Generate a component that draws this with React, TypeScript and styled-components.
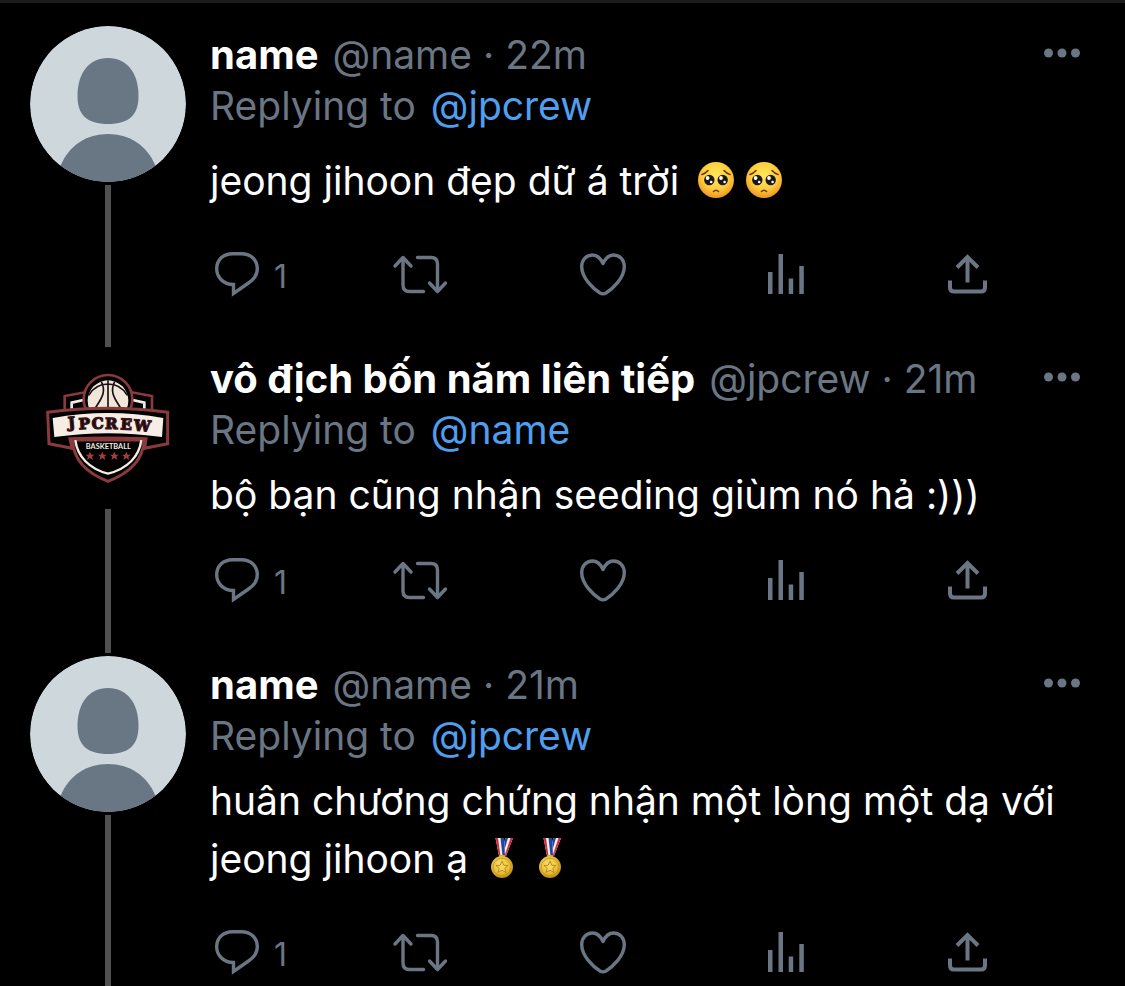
import React from "react";
import styled, { createGlobalStyle } from "styled-components";

const GlobalStyle = createGlobalStyle`
  *, *::before, *::after { box-sizing: border-box; }
  body {
    margin: 0;
    background: #000;
    color: #fff;
    font-family: Inter, "Liberation Sans", sans-serif;
    overflow: hidden;
  }
`;

const Timeline = styled.main`
  height: 100vh;
  overflow: hidden;
  padding-top: 23px;
  border-top: 3px solid #1c1c1c;
`;

const Tweet = styled.article`
  display: flex;
  gap: 24px;
  padding-left: 30px;
`;

const Rail = styled.div`
  flex: none;
  width: 156px;
  display: flex;
  flex-direction: column;
  align-items: center;
  gap: 3px;
  padding-bottom: 3px;
`;

const Thread = styled.div`
  flex: 1;
  width: 6px;
  background: #505050;
`;

const Picture = styled.svg`
  display: block;
  flex: none;
  width: 156px;
  height: 156px;
  border-radius: 50%;
`;

const Content = styled.div`
  flex: 1;
  min-width: 0;
  padding: 3px 0 53px;
`;

const Header = styled.header`
  display: flex;
  align-items: center;
  padding-right: 44px;
  font-size: 39px;
  line-height: 51px;
  color: #6b7684;
`;

const Name = styled.strong`
  color: #fff;
  font-size: 40px;
  font-weight: 700;
  margin-right: 14px;
`;

const Meta = styled.span`
  flex: 1;
  white-space: nowrap;
`;

const MoreButton = styled.button`
  display: flex;
  padding: 0 0 4px;
  border: 0;
  background: none;
  color: #6b7684;
  cursor: pointer;
`;

const ReplyLine = styled.div`
  font-size: 39px;
  line-height: 51px;
  color: #6b7684;
`;

const Mention = styled.a`
  color: #4f9fee;
  text-decoration: none;
  margin-left: 4px;
`;

const Body = styled.p`
  margin: 16px 0 36px;
  padding-right: 44px;
  font-size: 39px;
  line-height: 48px;
`;

const Emoji = styled.svg`
  width: 48px;
  height: 66px;
  vertical-align: -18px;
`;

const Actions = styled.div`
  display: grid;
  grid-template-columns: repeat(5, 1fr);
  height: 48px;
`;

const ActionButton = styled.button`
  display: flex;
  align-items: center;
  gap: 10px;
  padding: 0;
  border: 0;
  background: none;
  color: #6b7684;
  font-family: inherit;
  font-size: 32px;
  line-height: 40px;
  cursor: pointer;
`;

const Count = styled.span`
  padding-top: 8px;
`;

const Icon = styled.svg`
  display: block;
  width: 54px;
  height: 48px;
  overflow: visible;
  fill: none;
  stroke: currentColor;
  stroke-width: 3.4;
  stroke-linecap: round;
  stroke-linejoin: round;
`;

const DefaultAvatar = () => (
  <Picture viewBox="0 0 156 156" role="img" aria-label="Default avatar">
    <circle cx="78" cy="78" r="78" fill="#ced7dc" />
    <path
      d="M78 32C97 32 108.500 47 108.500 70C108.500 89 99 98 78 98C57 98 47.500 89 47.500 70C47.500 47 59 32 78 32Z"
      fill="#697684"
    />
    <path d="M30.500 140C39 119 57 108 78 108C99 108 117 119 125.500 140A78 78 0 0 1 30.500 140Z" fill="#697684" />
  </Picture>
);

const CrewAvatar = () => (
  <Picture viewBox="30 30 468 468" role="img" aria-label="JPCREW Basketball">
    <g fill="#000" stroke="#8a3a3c" strokeWidth="8">
      <path d="M134 212V168L200 156H330L396 168V212" />
      <path d="M155 206V188L190 180M373 206V188L338 180" stroke="#f4ece2" strokeWidth="8" />
      <circle cx="264" cy="178" r="73" />
    </g>
    <circle cx="264" cy="182" r="61" fill="#f0e6da" />
    <g fill="none" stroke="#181014" strokeWidth="5">
      <path d="M264 121V210M206 166Q226 132 264 132Q302 132 322 166M244 125C262 160 238 182 224 208M284 125C266 160 290 182 304 208" />
    </g>
    <path
      d="M158 300C160 356 196 398 264 424C332 398 370 356 372 300Z"
      fill="#000"
      stroke="#8a3a3c"
      strokeWidth="9"
    />
    <path d="M166 300C172 350 208 386 264 401C322 386 358 350 364 300" fill="none" stroke="#f4ece2" strokeWidth="7" />
    <path
      d="M83 217Q264 193 443 217V311L374 325L378 296Q264 292 150 296L156 325L87 311Z"
      fill="#000"
      stroke="#8a3a3c"
      strokeWidth="9"
    />
    <path d="M98 234Q264 204 430 234L426 291Q264 268 103 291Z" fill="#f6eee4" />
    <text
      x="156 194 233 274 318 366"
      y="264 268 266 266 268 271"
      rotate="-5 -3 -1 1 3 5"
      fill="#10080a"
      stroke="#3c141a"
      strokeWidth="4"
      fontFamily="DejaVu Serif, serif"
      fontWeight="700"
      fontSize="45"
      textAnchor="middle"
    >
      JPCREW
    </text>
    <text
      x="265"
      y="328"
      fill="#f4ece2"
      fontFamily="Lato, sans-serif"
      fontWeight="700"
      fontSize="22"
      textAnchor="middle"
    >
      BASKETBALL
    </text>
    <g fill="#a23c40">
      {[210, 247, 283, 319].map((x) => (
        <path key={x} transform={`translate(${x} 348)`} d="M0-13L4-4L13-4L6 2L9 12L0 6L-9 12L-6 2L-13-4L-4-4Z" />
      ))}
    </g>
  </Picture>
);

const PleadingFace = () => (
  <Emoji viewBox="-2 0 48 66" role="img" aria-label="🥺">
    <defs>
      <radialGradient id="face-skin" cx="50%" cy="38%" r="62%">
        <stop offset="0" stopColor="#ffe95c" />
        <stop offset="0.6" stopColor="#fdce3e" />
        <stop offset="1" stopColor="#ee9523" />
      </radialGradient>
    </defs>
    <circle cx="24" cy="33" r="18" fill="url(#face-skin)" />
    <circle cx="17.300" cy="33" r="5.200" fill="#1d1716" />
    <circle cx="30.700" cy="33" r="5.200" fill="#1d1716" />
    <g fill="#fff">
      <circle cx="15.600" cy="31" r="1.900" />
      <circle cx="29" cy="31" r="1.900" />
      <circle cx="19.200" cy="35" r="1.300" />
      <circle cx="32.600" cy="35" r="1.300" />
    </g>
    <path
      d="M10 27.500Q13.500 26.500 16 23.500M38 27.500Q34.500 26.500 32 23.500M21.500 44.500Q24 42 26.500 44.500"
      fill="none"
      stroke="#6a3a10"
      strokeWidth="1.600"
      strokeLinecap="round"
    />
  </Emoji>
);

const Medal = () => (
  <Emoji viewBox="1 -1 48 66" role="img" aria-label="🏅">
    <defs>
      <radialGradient id="medal-gold" cx="45%" cy="40%" r="60%">
        <stop offset="0" stopColor="#fbe77a" />
        <stop offset="0.650" stopColor="#e8bd35" />
        <stop offset="1" stopColor="#b98a18" />
      </radialGradient>
    </defs>
    <path d="M27.500 12H35L28 30H23Z" fill="#f2f2f6" />
    <path d="M32.500 12H35L28 30H26.500Z" fill="#d22c3c" />
    <path d="M27.500 12H30L24.500 30H23Z" fill="#25459c" />
    <path d="M17.500 12H26L27 30H21Z" fill="#f2f2f6" />
    <path d="M17.500 12H20L22.500 30H21Z" fill="#d22c3c" />
    <path d="M22.500 12H26L27 30H24.500Z" fill="#25459c" />
    <rect x="21" y="29" width="6" height="4" rx="1" fill="#dcae30" />
    <circle cx="24" cy="41" r="11" fill="url(#medal-gold)" />
    <circle cx="24" cy="41" r="8.800" fill="none" stroke="#c3941f" strokeWidth="0.800" />
    <path
      d="M24 35L25.800 39.200L30 39.500L26.800 42.300L28 46.500L24 44.200L20 46.500L21.200 42.300L18 39.500L22.200 39.200Z"
      fill="#f4d75a"
      stroke="#b18218"
      strokeWidth="0.900"
    />
  </Emoji>
);

const ReplyIcon = () => (
  <Icon viewBox="0 0 54 48">
    <path
      d="M23.500 35.500C13 35.500 6.700 28 6.700 19.800C6.700 10.500 13.500 4.700 22.500 4.700H31.500C41 4.700 47.300 11 47.300 19.500C47.300 26 44 30.500 38.500 34L23.500 44.500Z"
      strokeLinejoin="miter"
    />
  </Icon>
);

const RetweetIcon = () => (
  <Icon viewBox="0 0 54 48">
    <path d="M2 17L10 8.500L18 17M10 9V36Q10 42.500 16.500 42.500H30.500M24.500 8.500H38Q44.500 8.500 44.500 15V42M36.500 34L44.500 42.500L52.500 34" />
  </Icon>
);

const LikeIcon = () => (
  <Icon viewBox="0 0 54 48">
    <path d="M27 14.500C24.500 9 21 6 16.500 6C10 6 5.700 11 5.700 17.500C5.700 29 17 39.500 24 44Q27 45.800 30 44C37 39.500 48.300 29 48.300 17.500C48.300 11 44 6 37.500 6C33 6 29.500 9 27 14.500Z" />
  </Icon>
);

const StatsIcon = () => (
  <Icon viewBox="0 0 54 48">
    <path
      d="M9 23H13.500V45H9ZM19.500 5H24V45H19.500ZM29.700 29.500H34.200V45H29.700ZM40.300 17H44.800V45H40.300Z"
      fill="currentColor"
      stroke="none"
    />
  </Icon>
);

const SharePath = styled.path`
  stroke-width: 4;
  stroke-linecap: butt;
  stroke-linejoin: miter;
`;

const ShareIcon = () => (
  <Icon viewBox="0 0 54 48">
    <SharePath d="M8 31.500V38.500Q8 42.500 12 42.500H39Q43 42.500 43 38.500V31.500M25.500 33.500V8M15 18.500L25.500 8L36 18.500" />
  </Icon>
);

type TweetProps = {
  avatar: React.ReactNode;
  name: string;
  handle: string;
  time: string;
  replyTo: string;
  children: React.ReactNode;
};

const TweetItem = ({ avatar, name, handle, time, replyTo, children }: TweetProps) => (
  <Tweet>
    <Rail>
      {avatar}
      <Thread />
    </Rail>
    <Content>
      <Header>
        <Name>{name}</Name>
        <Meta>
          {handle} · {time}
        </Meta>
        <MoreButton aria-label="More">
          <svg width="38" height="10" viewBox="0 0 38 10" fill="currentColor">
            <circle cx="5.500" cy="5" r="4.500" />
            <circle cx="19" cy="5" r="4.500" />
            <circle cx="32.500" cy="5" r="4.500" />
          </svg>
        </MoreButton>
      </Header>
      <ReplyLine>
        Replying to <Mention href="#">{replyTo}</Mention>
      </ReplyLine>
      <Body>{children}</Body>
      <Actions>
        <ActionButton aria-label="Reply, 1 reply">
          <ReplyIcon />
          <Count>1</Count>
        </ActionButton>
        <ActionButton aria-label="Retweet">
          <RetweetIcon />
        </ActionButton>
        <ActionButton aria-label="Like">
          <LikeIcon />
        </ActionButton>
        <ActionButton aria-label="View analytics">
          <StatsIcon />
        </ActionButton>
        <ActionButton aria-label="Share">
          <ShareIcon />
        </ActionButton>
      </Actions>
    </Content>
  </Tweet>
);

export default function App() {
  return (
    <>
      <GlobalStyle />
      <Timeline>
        <TweetItem avatar={<DefaultAvatar />} name="name" handle="@name" time="22m" replyTo="@jpcrew">
          jeong jihoon đẹp dữ á trời <PleadingFace />
          <PleadingFace />
        </TweetItem>
        <TweetItem
          avatar={<CrewAvatar />}
          name="vô địch bốn năm liên tiếp"
          handle="@jpcrew"
          time="21m"
          replyTo="@name"
        >
          bộ bạn cũng nhận seeding giùm nó hả :)))
        </TweetItem>
        <TweetItem avatar={<DefaultAvatar />} name="name" handle="@name" time="21m" replyTo="@jpcrew">
          huân chương chứng nhận một lòng một dạ với jeong jihoon ạ <Medal />
          <Medal />
        </TweetItem>
      </Timeline>
    </>
  );
}
